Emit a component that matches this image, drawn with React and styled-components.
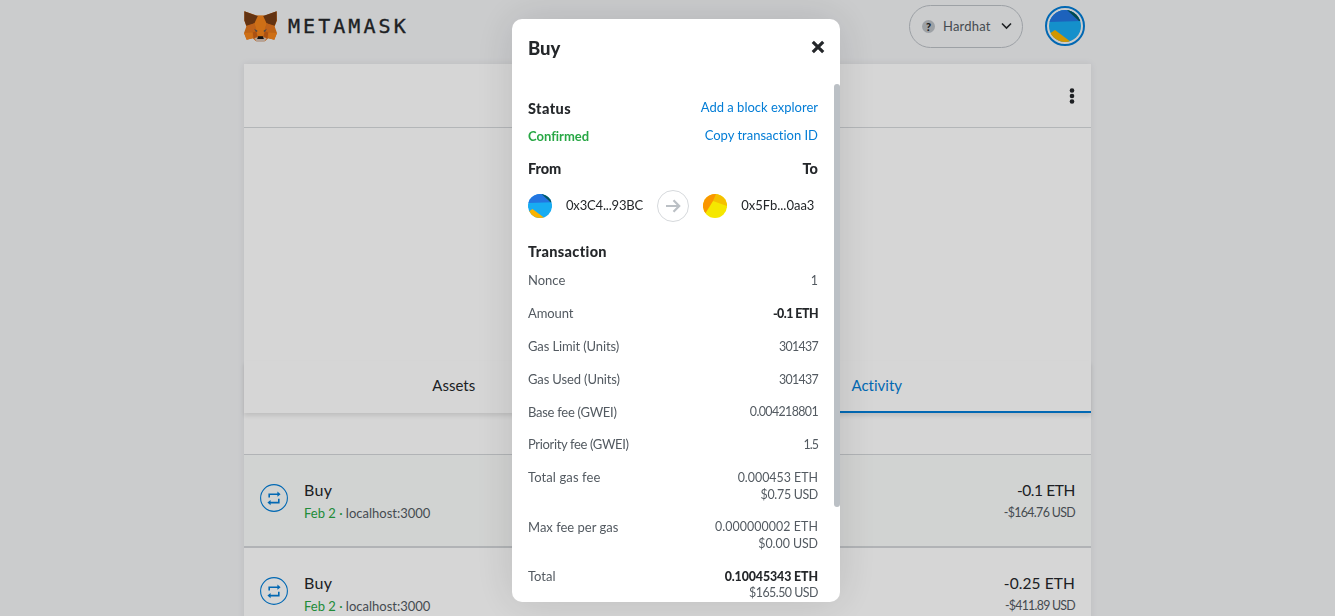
import React from "react";
import styled, { createGlobalStyle } from "styled-components";

const GlobalStyle = createGlobalStyle`
  *, *::before, *::after { box-sizing: border-box; }
  body {
    margin: 0;
    height: 616px;
    overflow: hidden;
    background: #f2f3f5;
    color: #24272a;
    font-family: Lato, "Open Sans", sans-serif;
    font-variant-ligatures: none;
  }
`;

const Text = styled.span`
  display: block;
  white-space: nowrap;
  letter-spacing: ${(p) => p.$track || 0}px;
`;

/* Wallet page */

const Page = styled.div`
  width: 847px;
  height: 616px;
  margin-left: 244px;
  display: flex;
  flex-direction: column;
`;

const Header = styled.header`
  height: 64px;
  flex: none;
  display: flex;
  align-items: flex-start;
  justify-content: space-between;
  padding: 5px 6px 0 0;
`;

const Brand = styled.div`
  display: flex;
  align-items: center;
  gap: 11px;
  height: 42px;
`;

const Wordmark = styled(Text)`
  font: 400 20px/30px "DejaVu Sans Mono", monospace;
  -webkit-text-stroke: 0.35px #24272a;
`;

const HeaderActions = styled.div`
  display: flex;
  align-items: flex-start;
  gap: 22px;
`;

const NetworkPill = styled.div`
  display: flex;
  align-items: center;
  width: 114px;
  height: 43px;
  padding-left: 12px;
  border: 1px solid #bbc0c5;
  border-radius: 22px;
  color: #535a61;
  font-size: 13px;
`;

const NetworkName = styled(Text)`
  padding-bottom: 2px;
`;

const NetworkBadge = styled.span`
  width: 13px;
  height: 13px;
  margin-right: 8px;
  border-radius: 50%;
  background: #bbc0c5;
  color: #24272a;
  font: 900 11px/13px Lato, sans-serif;
  text-align: center;
`;

const Chevron = styled.svg`
  margin-left: 10px;
  margin-bottom: 1px;
`;

const AccountRing = styled.div`
  width: 40px;
  height: 40px;
  margin-top: 1px;
  border: 2px solid #037dd6;
  border-radius: 50%;
  display: flex;
  align-items: center;
  justify-content: center;
`;

const Card = styled.main`
  flex: 1;
  background: #fff;
  box-shadow: 0 0 7px rgba(0, 0, 0, 0.08);
  display: flex;
  flex-direction: column;
`;

const MenuBar = styled.div`
  height: 64px;
  flex: none;
  border-bottom: 1px solid #d6d9dc;
  display: flex;
  justify-content: flex-end;
  align-items: center;
  padding-right: 16px;
`;

const Overview = styled.div`
  height: 233px;
  flex: none;
`;

const Tabs = styled.div`
  height: 52px;
  flex: none;
  display: grid;
  grid-template-columns: 1fr 1fr;
  box-shadow: 0 3px 4px rgba(0, 0, 0, 0.1);
`;

const Tab = styled.div`
  display: flex;
  justify-content: center;
  padding: 14px ${(p) => (p.$active ? 5 : 4)}px 0 0;
  font-size: 15px;
  line-height: 20px;
  color: ${(p) => (p.$active ? "#037dd6" : "#24272a")};
  border-bottom: 2px solid ${(p) => (p.$active ? "#037dd6" : "transparent")};
`;

const ActivityList = styled.div`
  padding-top: 41px;
`;

const ActivityRow = styled.div`
  height: ${(p) => (p.$first ? 92 : 94)}px;
  display: flex;
  align-items: flex-start;
  padding: 29px 16px 0;
  border-top: ${(p) => (p.$first ? "1px" : "2px")} solid #d3d6d9;
  background: ${(p) => (p.$first ? "#fafcfb" : "#fff")};
`;

const ActivityInfo = styled.div`
  flex: 1;
  margin-left: 16px;
  margin-top: -5px;
`;

const ActivityTitle = styled(Text)`
  font-size: 16px;
  line-height: 22px;
`;

const ActivityMeta = styled(Text)`
  font-size: 13px;
  line-height: 20px;
  padding-top: 2px;
  color: #535a61;
`;

const ActivityDate = styled.span`
  color: #28a745;
`;

const ActivityAmounts = styled.div`
  margin-top: -5px;
  display: flex;
  flex-direction: column;
  align-items: flex-end;
`;

const PrimaryAmount = styled(Text)`
  font-size: 15.5px;
  line-height: 22px;
`;

const FiatAmount = styled(Text)`
  font-size: 12.4px;
  line-height: 20px;
  padding-top: 2px;
  color: #535a61;
`;

/* Transaction details dialog */

const Overlay = styled.div`
  position: fixed;
  inset: 0;
  display: flex;
  align-items: flex-start;
  justify-content: center;
  padding: 19px 0 0 17px;
  background: rgba(0, 0, 0, 0.16);
`;

const Dialog = styled.section`
  width: 328px;
  height: 583px;
  overflow: hidden;
  border-radius: 10px;
  background: #fff;
  box-shadow: 0 0 44px rgba(0, 0, 0, 0.13);
  display: flex;
  flex-direction: column;
`;

const DialogHeader = styled.div`
  height: 65px;
  flex: none;
  display: flex;
  justify-content: space-between;
  align-items: flex-start;
  padding: 17px 15px 0 16px;
`;

const DialogTitle = styled(Text)`
  font-size: 18.5px;
  font-weight: 900;
  line-height: 24px;
`;

const CloseIcon = styled.svg`
  margin-top: 4px;
`;

const DialogBody = styled.div`
  flex: 1;
  min-height: 0;
  display: flex;
  justify-content: space-between;
`;

const Content = styled.div`
  width: 290px;
  margin-left: 16px;
`;

const ScrollThumb = styled.div`
  width: 6px;
  height: 423px;
  border-radius: 3px;
  background: #bbc0c5;
`;

const Line = styled.div`
  display: flex;
  justify-content: space-between;
  align-items: flex-start;
  height: ${(p) => p.$height}px;
`;

const StatusBlock = styled.div`
  padding-top: 13px;
`;

const Heading = styled(Text)`
  font-size: 14.5px;
  font-weight: 900;
  line-height: 24px;
`;

const Confirmed = styled(Text)`
  font-size: 13px;
  font-weight: 700;
  line-height: 22px;
  color: #28a745;
`;

const Link = styled(Text)`
  font-size: 13px;
  line-height: 21px;
  color: #037dd6;
`;

const Parties = styled.div`
  display: flex;
  align-items: center;
  height: 32px;
  margin-top: 6px;
`;

const Party = styled.div`
  display: flex;
  flex: none;
  align-items: center;
  gap: 14px;
  font-size: 13px;
  line-height: 18px;
  & > span { margin-top: -2px; }
`;

const ArrowCircle = styled.div`
  flex: none;
  width: 32px;
  height: 32px;
  margin: 0 14px;
  border: 1px solid #d6d9dc;
  border-radius: 50%;
  display: flex;
  align-items: center;
  justify-content: center;
`;

const Breakdown = styled.div`
  padding-top: 18px;
`;

const DetailRow = styled.div`
  display: flex;
  justify-content: space-between;
  align-items: flex-start;
  height: ${(p) => (p.$double ? 49.4 : 32.8)}px;
  padding-top: 8.4px;
  color: #535a61;
  line-height: 16.6px;
`;

const DetailLabel = styled(Text)`
  font-size: 13px;
`;

const DetailValues = styled.div`
  display: flex;
  flex-direction: column;
  align-items: flex-end;
  padding-top: 0.8px;
`;

const DetailValue = styled(Text)`
  font-size: 12.4px;
  font-weight: ${(p) => (p.$strong ? 900 : 400)};
  color: ${(p) => (p.$strong ? "#24272a" : "inherit")};
`;

function Fox() {
  return (
    <svg width="33" height="31" viewBox="26 32 98 92">
      <path fill="#e2761b" d="M27 33 62 45H88L123 33 124 60 117 78 124 97 116 117 98 113 88 122H62L52 113 34 117 26 97 33 78 27 60Z" />
      <path fill="#f6851b" d="M56 68 66 46H84L94 68 88 84 84 106H66L62 84ZM26 97 52 96 52 113 34 117ZM124 97 98 96 98 113 116 117Z" />
      <path fill="#763d16" d="M27 33 67 47 57 68 33 76 27 60ZM123 33 83 47 93 68 117 76 123 60Z" />
      <path fill="#cd6116" d="M52 96 62 92 66 107 55 114ZM98 96 88 92 84 107 95 114Z" />
      <path fill="#e4751f" d="M33 78 57 68 62 86 46 94ZM117 78 93 68 88 86 104 94Z" />
      <path fill="#54545c" d="M56 85 67 91 62 94ZM94 85 83 91 88 94Z" />
      <path fill="#d7c1b3" d="M57 113 66 110H84L93 113 86 123H64Z" />
      <path fill="#161616" d="M68 107H82L85 115H65Z" />
    </svg>
  );
}

function BlueJazzicon({ size }) {
  return (
    <svg width={size} height={size} viewBox="0 0 32 32">
      <clipPath id={`blue-${size}`}><circle cx="16" cy="16" r="16" /></clipPath>
      <g clipPath={`url(#blue-${size})`}>
        <path fill="#18acf2" d="M0 0H32V32H0Z" />
        <path fill="#2375e1" d="M0 0H32V11L0 12Z" />
        <path fill="#03595e" d="M18 0H32V11H30Z" />
        <path fill="#fab300" d="M0 24 6 20 22 32H0Z" />
      </g>
    </svg>
  );
}

function YellowJazzicon() {
  return (
    <svg width="24" height="24" viewBox="0 0 24 24">
      <clipPath id="yellow"><circle cx="12" cy="12" r="12" /></clipPath>
      <g clipPath="url(#yellow)">
        <path fill="#f5e700" d="M0 0H24V24H0Z" />
        <path fill="#f5c000" d="M11 0H24V12L10 7Z" />
        <path fill="#fa9600" d="M0 0H13L10 7 2 20 0 20Z" />
      </g>
    </svg>
  );
}

function SwapIcon() {
  return (
    <svg width="28" height="28" viewBox="0 0 28 28" fill="none">
      <circle cx="14" cy="14" r="13.4" stroke="#037dd6" strokeWidth="1.1" />
      <path stroke="#037dd6" strokeWidth="1.6" d="M9.2 13.4V10.2H18.2M18.8 14.8V18.6H9.8" />
      <path fill="#037dd6" d="M17.4 7.6 20.6 10.2 17.4 12.8ZM10.6 16 7.4 18.6 10.6 21.2Z" />
    </svg>
  );
}

const activities = [
  { amount: "-0.1 ETH", amountTrack: -0.4, fiat: "-$164.76 USD", fiatTrack: -0.65 },
  { amount: "-0.25 ETH", amountTrack: 0.1, fiat: "-$411.89 USD", fiatTrack: -0.75 },
];

const details = [
  { label: "Nonce", track: 0, values: [["1", 0]] },
  { label: "Amount", track: -0.1, values: [["-0.1 ETH", -0.5, true]] },
  { label: "Gas Limit (Units)", track: -0.12, values: [["301437", -0.7]] },
  { label: "Gas Used (Units)", track: -0.13, values: [["301437", -0.7]] },
  { label: "Base fee (GWEI)", track: -0.27, values: [["0.004218801", -0.6]] },
  { label: "Priority fee (GWEI)", track: -0.35, values: [["1.5", -0.9]] },
  { label: "Total gas fee", track: 0.1, double: true, values: [["0.000453 ETH", 0], ["$0.75 USD", -0.3]] },
  { label: "Max fee per gas", track: 0, double: true, values: [["0.000000002 ETH", 0.08], ["$0.00 USD", -0.05]] },
  { label: "Total", track: 0, double: true, values: [["0.10045343 ETH", -0.1, true], ["$165.50 USD", -0.5]] },
];

export default function App() {
  return (
    <>
      <GlobalStyle />
      <Page>
        <Header>
          <Brand>
            <Fox />
            <Wordmark $track={3.05}>METAMASK</Wordmark>
          </Brand>
          <HeaderActions>
            <NetworkPill>
              <NetworkBadge>?</NetworkBadge>
              <NetworkName $track={0.2}>Hardhat</NetworkName>
              <Chevron width="11" height="8" viewBox="0 0 11 8" fill="none" stroke="#24272a" strokeWidth="1.6">
                <path d="M1 1.5 5.5 6 10 1.5" />
              </Chevron>
            </NetworkPill>
            <AccountRing><BlueJazzicon size={32} /></AccountRing>
          </HeaderActions>
        </Header>
        <Card>
          <MenuBar>
            <svg width="6" height="16" viewBox="0 0 6 16" fill="#24272a">
              <circle cx="3" cy="2.5" r="2.3" />
              <circle cx="3" cy="8" r="2.3" />
              <circle cx="3" cy="13.5" r="2.3" />
            </svg>
          </MenuBar>
          <Overview />
          <Tabs>
            <Tab>Assets</Tab>
            <Tab $active>Activity</Tab>
          </Tabs>
          <ActivityList>
            {activities.map((a, i) => (
              <ActivityRow key={a.amount} $first={i === 0}>
                <SwapIcon />
                <ActivityInfo>
                  <ActivityTitle $track={0.3}>Buy</ActivityTitle>
                  <ActivityMeta>
                    <ActivityDate>Feb 2 · </ActivityDate>localhost:3000
                  </ActivityMeta>
                </ActivityInfo>
                <ActivityAmounts>
                  <PrimaryAmount $track={a.amountTrack}>{a.amount}</PrimaryAmount>
                  <FiatAmount $track={a.fiatTrack}>{a.fiat}</FiatAmount>
                </ActivityAmounts>
              </ActivityRow>
            ))}
          </ActivityList>
        </Card>
      </Page>
      <Overlay>
        <Dialog>
          <DialogHeader>
            <DialogTitle>Buy</DialogTitle>
            <CloseIcon width="14" height="14" viewBox="0 0 14 14" stroke="#24272a" strokeWidth="3.2">
              <path d="M1.8 1.8 12.2 12.2M12.2 1.8 1.8 12.2" />
            </CloseIcon>
          </DialogHeader>
          <DialogBody>
            <Content>
              <StatusBlock>
                <Line $height={28}>
                  <Heading $track={0.4}>Status</Heading>
                  <Link>Add a block explorer</Link>
                </Line>
                <Line $height={32}>
                  <Confirmed>Confirmed</Confirmed>
                  <Link>Copy transaction ID</Link>
                </Line>
                <Line $height={27}>
                  <Heading $track={-0.1}>From</Heading>
                  <Heading>To</Heading>
                </Line>
              </StatusBlock>
              <Parties>
                <Party>
                  <BlueJazzicon size={24} />
                  <Text $track={-0.17}>0x3C4...93BC</Text>
                </Party>
                <ArrowCircle>
                  <svg width="16" height="14" viewBox="0 0 16 14" fill="none" stroke="#bbc0c5" strokeWidth="2.2">
                    <path d="M1 7H14M8.5 1.2 14.2 7 8.5 12.8" />
                  </svg>
                </ArrowCircle>
                <Party>
                  <YellowJazzicon />
                  <Text>0x5Fb...0aa3</Text>
                </Party>
              </Parties>
              <Breakdown>
                <Heading $track={0.35}>Transaction</Heading>
                {details.map((d) => (
                  <DetailRow key={d.label} $double={d.double}>
                    <DetailLabel $track={d.track}>{d.label}</DetailLabel>
                    <DetailValues>
                      {d.values.map(([value, track, strong]) => (
                        <DetailValue key={value} $track={track} $strong={strong}>{value}</DetailValue>
                      ))}
                    </DetailValues>
                  </DetailRow>
                ))}
              </Breakdown>
            </Content>
            <ScrollThumb />
          </DialogBody>
        </Dialog>
      </Overlay>
    </>
  );
}
